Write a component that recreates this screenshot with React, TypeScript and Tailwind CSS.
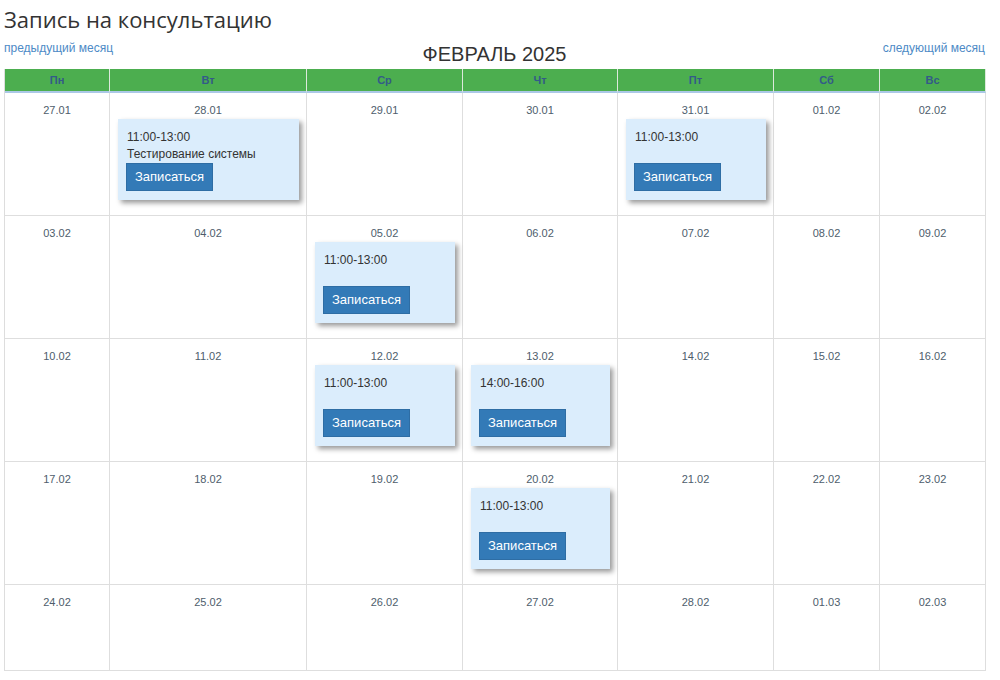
import React from 'react';

type Slot = { time: string; title?: string };

const days = ['Пн', 'Вт', 'Ср', 'Чт', 'Пт', 'Сб', 'Вс'];

const weeks: string[][] = [
  ['27.01', '28.01', '29.01', '30.01', '31.01', '01.02', '02.02'],
  ['03.02', '04.02', '05.02', '06.02', '07.02', '08.02', '09.02'],
  ['10.02', '11.02', '12.02', '13.02', '14.02', '15.02', '16.02'],
  ['17.02', '18.02', '19.02', '20.02', '21.02', '22.02', '23.02'],
  ['24.02', '25.02', '26.02', '27.02', '28.02', '01.03', '02.03'],
];

const slots: Record<string, Slot> = {
  '28.01': { time: '11:00-13:00', title: 'Тестирование системы' },
  '31.01': { time: '11:00-13:00' },
  '05.02': { time: '11:00-13:00' },
  '12.02': { time: '11:00-13:00' },
  '13.02': { time: '14:00-16:00' },
  '20.02': { time: '11:00-13:00' },
};

const SlotCard: React.FC<{ slot: Slot }> = ({ slot }) => (
  <div className="ml-[8px] mr-[7px] mt-[1px] bg-[#dbedfc] pt-[10px] pb-[9px] pl-[9px] pr-[8px] shadow-[3px_3px_5px_rgba(0,0,0,0.4)] text-left">
    <div className="text-[12px] leading-[17px] text-[#333]">{slot.time}</div>
    <div className="text-[12px] leading-[17px] text-[#333] h-[17px] whitespace-nowrap">{slot.title ?? ''}</div>
    <button className="-ml-[1px] h-[28px] px-[8px] bg-[#337ab7] text-white text-[13px] border border-[#2e6da4]">
      Записаться
    </button>
  </div>
);

export default function App() {
  return (
    <div className="bg-white w-[1000px] h-[680px] pl-[4px] font-['Liberation_Sans',Arial,sans-serif] text-[#333]">
      <h1 className="pt-[5px] text-[22px] leading-[28px] font-['Open_Sans',sans-serif] text-[#333]">
        Запись на консультацию
      </h1>
      <div className="w-[981px] flex items-start h-[36px]">
        <a className="flex-1 pt-[7px] text-[12px] leading-[16px] text-[#4d8ac6]">предыдущий месяц</a>
        <div className="pt-[9px] text-[20px] leading-[24px] text-[#333]">ФЕВРАЛЬ 2025</div>
        <a className="flex-1 pt-[7px] text-right text-[12px] leading-[16px] text-[#4d8ac6]">следующий месяц</a>
      </div>
      <div className="w-[981px] grid grid-cols-[105px_197px_156px_155px_156px_106px_106px] border-l border-[#ddd]">
        {days.map((d) => (
          <div
            key={d}
            className="h-[24px] bg-[#4cae4f] border-r border-[#dce9dc] border-b-2 border-b-[#abc8e6] text-center text-[11px] leading-[22px] font-bold text-[#335b88]"
          >
            {d}
          </div>
        ))}
        {weeks.map((week, wi) =>
          week.map((date) => (
            <div
              key={date + wi}
              className={`border-r border-b border-[#dedede] text-center ${wi === 4 ? 'h-[86px]' : 'h-[123px]'}`}
            >
              <div className="pt-[9px] text-[11px] leading-[16px] text-[#4e5d6c]">{date}</div>
              {slots[date] && <SlotCard slot={slots[date]} />}
            </div>
          ))
        )}
      </div>
    </div>
  );
}
